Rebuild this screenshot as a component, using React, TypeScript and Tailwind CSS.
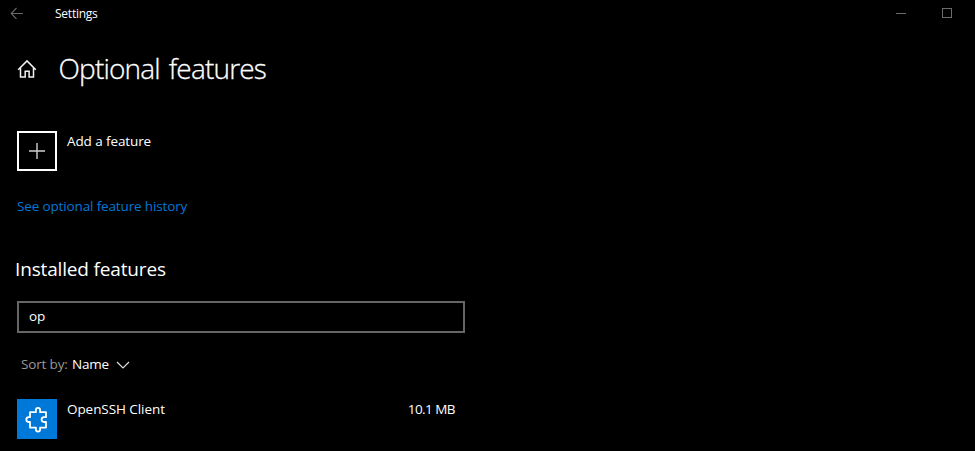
import React from "react";

function TitleBar() {
  return (
    <header className="flex h-[28px] items-center">
      <svg className="ml-[10px] mb-[3px] shrink-0" width="14" height="12" viewBox="0 0 14 12" fill="none" stroke="#686868" strokeWidth="1.1">
        <path d="M1 6.5H13M6.5 1L1.2 6.5L6.5 12" />
      </svg>
      <span className="ml-[31px] text-[12px] leading-[28px] tracking-[-0.24px]">Settings</span>
      <div className="ml-auto mr-[23px] flex items-center gap-[36px]">
        <div className="mb-[2px] h-px w-[10px] bg-[#6b6b6b]" />
        <div className="mb-[2px] h-[10px] w-[10px] border border-[#6b6b6b]" />
      </div>
    </header>
  );
}

function HomeIcon() {
  return (
    <svg width="20" height="20" viewBox="0 0 20 20" fill="none" stroke="#f2f2f2" strokeWidth="1.5">
      <path d="M1.2 10.7L10 1.9L18.8 10.7M3.5 8.8V17.9H8.2V12.2H12.1V17.9H16.5V8.8" />
    </svg>
  );
}

function PuzzleIcon() {
  return (
    <svg width="40" height="40" viewBox="0 0 40 40" fill="none" stroke="#fff" strokeWidth="1.8" strokeLinejoin="round">
      <path d="M13 13.2H18.9V10.9A2.1 2.1 0 0 1 23.1 10.9V13.2H29V18.2H27A2.4 2.4 0 0 0 27 23H29V28.6H23.1V30.4A2.1 2.1 0 0 1 18.9 30.4V28.6H13V23H11.7A2.4 2.4 0 0 1 11.7 18.2H13Z" />
    </svg>
  );
}

export default function App() {
  return (
    <div className="h-[451px] w-[975px] overflow-hidden whitespace-nowrap bg-black font-['Open_Sans','Noto_Sans',sans-serif] text-[13.5px] leading-[20px] text-white">
      <TitleBar />
      <main className="flex flex-col items-start pl-[17px]">
        <div className="mt-[20px] flex h-[42px] items-center">
          <HomeIcon />
          <h1 className="ml-[21.5px] pb-[2px] text-[28px] font-light leading-[40px] tracking-[-0.82px] [word-spacing:2.5px] [-webkit-text-stroke:0.3px_white]">Optional features</h1>
        </div>
        <button className="mt-[41px] flex h-[40px] items-start text-left">
          <span className="flex h-[40px] w-[40px] items-center justify-center border-2 border-white">
            <svg width="16" height="16" viewBox="0 0 16 16" fill="none" stroke="#cfcfcf" strokeWidth="1.4">
              <path d="M0 8H16M8 0V16" />
            </svg>
          </span>
          <span className="ml-[10px] tracking-[-0.1px]">Add a feature</span>
        </button>
        <a className="mt-[25px] tracking-[-0.14px] text-[#0078d7]">See optional feature history</a>
        <h2 className="-ml-[2px] mt-[39px] text-[19px] leading-[28px] tracking-[-0.16px]">Installed features</h2>
        <input
          className="mt-[18px] h-[32px] w-[448px] border-2 border-[#666] bg-black px-[10px] pb-[2px] text-[13.5px] text-white outline-none"
          defaultValue="op"
        />
        <button className="ml-[4px] mt-[21px] flex h-[20px] items-center">
          <span className="w-[51px] text-left tracking-[-0.15px] text-[#999]">Sort by:</span>
          <span className="w-[38px] text-left tracking-[-0.2px]">Name</span>
          <svg className="ml-[6px] mt-[1px]" width="14" height="8" viewBox="0 0 14 8" fill="none" stroke="#e0e0e0" strokeWidth="1.2">
            <path d="M1 1L7 7L13 1" />
          </svg>
        </button>
        <div className="mt-[25px] flex w-[438px] items-start">
          <div className="h-[40px] w-[40px] bg-[#0078d7]">
            <PuzzleIcon />
          </div>
          <span className="ml-[10px] tracking-[-0.07px]">OpenSSH Client</span>
          <span className="ml-auto tracking-[-0.55px]">10.1 MB</span>
        </div>
      </main>
    </div>
  );
}
